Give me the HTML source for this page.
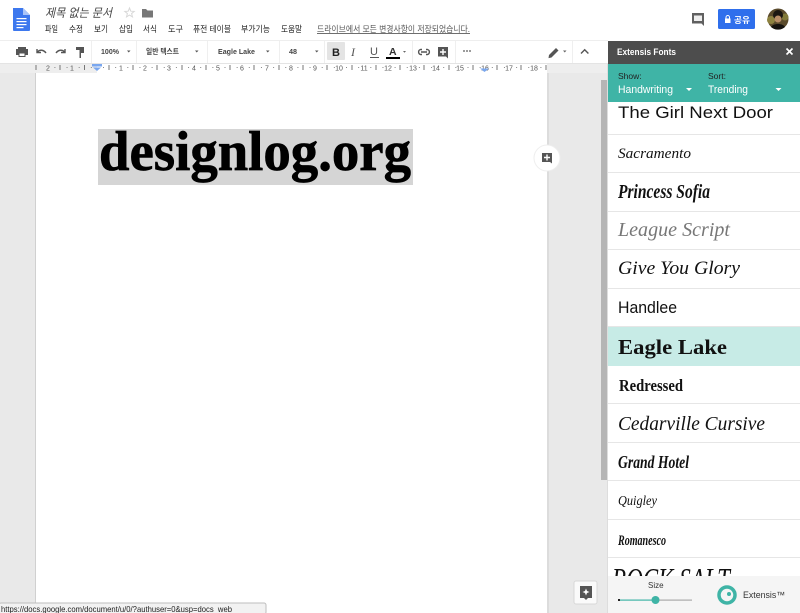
<!DOCTYPE html>
<html><head><meta charset="utf-8"><style>
html,body{margin:0;padding:0;background:#fff;width:800px;height:613px;overflow:hidden}
svg{display:block}
.k{font-family:"Liberation Sans","Noto Sans CJK KR",sans-serif}
.m{font-size:8.5px;fill:#222}
.t{font-size:7.5px;fill:#444;font-family:"Liberation Sans","Noto Sans CJK KR",sans-serif;font-weight:bold}
.r{font-size:7px;fill:#555;font-family:"Liberation Sans",sans-serif;text-anchor:middle}
.s{font-family:"Liberation Serif",serif;font-style:italic;fill:#111}
.h{font-family:"Liberation Sans",sans-serif;fill:#111}
.i{fill:none;stroke:#555;stroke-width:1.4}
</style></head><body>
<svg width="800" height="613" viewBox="0 0 800 613" xmlns="http://www.w3.org/2000/svg">
<rect width="800" height="613" fill="#fff"/>
<!-- doc icon -->
<path d="M13 8h10l7 7v15a1 1 0 0 1-1 1H14a1 1 0 0 1-1-1z" fill="#3d78ee"/>
<path d="M23 8l7 7h-7z" fill="#a9c4f7"/>
<rect x="16.500" y="18" width="10" height="1.200" fill="#fff"/><rect x="16.500" y="21" width="10" height="1.200" fill="#fff"/><rect x="16.500" y="24" width="10" height="1.200" fill="#fff"/><rect x="16.500" y="27" width="7" height="1.200" fill="#fff"/>
<!-- title -->
<text x="45" y="17" class="k" font-size="12" font-style="italic" fill="#444" textLength="67" lengthAdjust="spacingAndGlyphs">제목 없는 문서</text>
<path d="M129.500 8l1.300 3.200 3.400.2-2.600 2.200.9 3.300-3-1.800-3 1.800.9-3.300-2.600-2.200 3.400-.2z" fill="none" stroke="#d8d8d8" stroke-width="1"/>
<path d="M142 9h4l1.500 1.500H153v7h-11z" fill="#777"/>
<!-- menu -->
<text x="45" y="32" class="k m" textLength="13" lengthAdjust="spacingAndGlyphs">파일</text>
<text x="69" y="32" class="k m" textLength="14" lengthAdjust="spacingAndGlyphs">수정</text>
<text x="94" y="32" class="k m" textLength="14" lengthAdjust="spacingAndGlyphs">보기</text>
<text x="119" y="32" class="k m" textLength="14" lengthAdjust="spacingAndGlyphs">삽입</text>
<text x="143" y="32" class="k m" textLength="14" lengthAdjust="spacingAndGlyphs">서식</text>
<text x="168" y="32" class="k m" textLength="15" lengthAdjust="spacingAndGlyphs">도구</text>
<text x="193" y="32" class="k m" textLength="38" lengthAdjust="spacingAndGlyphs">퓨전 테이블</text>
<text x="241" y="32" class="k m" textLength="29" lengthAdjust="spacingAndGlyphs">부가기능</text>
<text x="281" y="32" class="k m" textLength="21" lengthAdjust="spacingAndGlyphs">도움말</text>
<text x="317" y="32" class="k" font-size="8.500" fill="#555" text-decoration="underline" textLength="153" lengthAdjust="spacingAndGlyphs">드라이브에서 모든 변경사항이 저장되었습니다.</text>
<!-- top right -->
<path d="M692 13h12v13l-2.500-2.500H692z" fill="#606060"/><rect x="694" y="15.500" width="8" height="5.500" fill="#eee"/>
<rect x="718" y="9" width="37" height="20" rx="1.500" fill="#2f6fec"/>
<rect x="725" y="18.500" width="5.500" height="4.500" fill="#fff"/><path d="M726 18.500v-1.200a1.700 1.700 0 0 1 3.500 0v1.200" fill="none" stroke="#fff"/>
<text x="734" y="23" class="k" font-size="8.500" font-weight="bold" fill="#fff" textLength="16" lengthAdjust="spacingAndGlyphs">공유</text>
<circle cx="778" cy="19" r="10.500" fill="#5a4a2c"/>
<circle cx="771" cy="20" r="4" fill="#8d8240"/><circle cx="785" cy="17" r="3.500" fill="#827a3a"/>
<circle cx="778" cy="15" r="5" fill="#1c1712"/><circle cx="778" cy="19" r="3.500" fill="#b98d68"/>
<path d="M771 27c2-4 12-4 14 0a10.500 10.500 0 0 1-14 0z" fill="#15120f"/>
<!-- toolbar -->
<rect x="0" y="40" width="608" height="1" fill="#eee"/>
<rect x="0" y="63" width="608" height="1" fill="#e4e4e4"/>
<rect x="91" y="41" width="1" height="22" fill="#efefef"/><rect x="136" y="41" width="1" height="22" fill="#efefef"/><rect x="207" y="41" width="1" height="22" fill="#efefef"/><rect x="279" y="41" width="1" height="22" fill="#efefef"/><rect x="324" y="41" width="1" height="22" fill="#efefef"/><rect x="412" y="41" width="1" height="22" fill="#efefef"/><rect x="455" y="41" width="1" height="22" fill="#efefef"/><rect x="572" y="41" width="1" height="22" fill="#efefef"/>
<!-- print -->
<path d="M18 47h8v2h2v6h-2.500v2h-7v-2H16v-6h2z" fill="#555"/><rect x="19.500" y="53.500" width="5" height="2.500" fill="#fff"/>
<path class="i" d="M37 49v3.500h4M37.500 52c2-2.500 6-2.500 8.500 1"/>
<path class="i" d="M65 49v3.500h-4M64.500 52c-2-2.500-6-2.500-8.500 1"/>
<path d="M76 47h8v3h-8z M79.500 50h4.500v3h-3v5h-1.500z" fill="#555"/>
<text x="101" y="54" class="t" textLength="18" lengthAdjust="spacingAndGlyphs">100%</text>
<path d="M127 50.500h3.500l-1.750 2z" fill="#555"/>
<text x="146" y="54" class="t" font-weight="normal" textLength="33" lengthAdjust="spacingAndGlyphs">일반 텍스트</text>
<path d="M195 50.500h3.500l-1.750 2z" fill="#555"/>
<text x="218" y="54" class="t" textLength="37" lengthAdjust="spacingAndGlyphs">Eagle Lake</text>
<path d="M266 50.500h3.500l-1.750 2z" fill="#555"/>
<text x="289" y="54" class="t" textLength="8" lengthAdjust="spacingAndGlyphs">48</text>
<path d="M315 50.500h3.500l-1.750 2z" fill="#555"/>
<rect x="327" y="42" width="18" height="18" rx="1" fill="#e4e4e4"/>
<text x="332" y="56" font-family="Liberation Sans" font-weight="bold" font-size="11" fill="#222">B</text>
<text x="351" y="56" font-family="Liberation Serif" font-style="italic" font-size="12" fill="#555">I</text>
<text x="370" y="55" font-family="Liberation Sans" font-size="11" fill="#555">U</text><rect x="370" y="57" width="9" height="1" fill="#555"/>
<text x="389" y="55" font-family="Liberation Sans" font-size="10.500" fill="#333" font-weight="bold">A</text><rect x="386" y="57" width="14" height="2" fill="#000"/>
<path d="M403 51h3l-1.500 1.700z" fill="#666"/>
<path class="i" d="M422 49.500h-1.500a2.600 2.600 0 0 0 0 5h1.500M426 49.500h1.500a2.600 2.600 0 0 1 0 5H426M421 52h6"/>
<path d="M438 47h10v11.500l-2-2h-8z" fill="#555"/><path d="M442.300 49h1.400v2.300h2.300v1.400h-2.300V55h-1.400v-2.300H440v-1.400h2.300z" fill="#fff"/>
<circle cx="464" cy="51" r=".9" fill="#555"/><circle cx="467" cy="51" r=".9" fill="#555"/><circle cx="470" cy="51" r=".9" fill="#555"/>
<path d="M549 55l7-7 2.500 2.500-7 7-3 .6z" fill="#555"/>
<path d="M563 50.500h3.500l-1.750 2z" fill="#666"/>
<path class="i" d="M581 53.500l3.700-3.700 3.700 3.700"/>
<!-- grey bg -->
<rect x="0" y="72" width="608" height="541" fill="#e9e9e9"/>
<!-- ruler -->
<rect x="0" y="64" width="608" height="9" fill="#eeeeee"/>
<rect x="97" y="64" width="450" height="9" fill="#fff"/>
<text x="48" y="70.500" class="r">2</text><text x="72" y="70.500" class="r">1</text>
<text x="121" y="70.500" class="r">1</text><text x="145" y="70.500" class="r">2</text><text x="169" y="70.500" class="r">3</text><text x="194" y="70.500" class="r">4</text><text x="218" y="70.500" class="r">5</text><text x="242" y="70.500" class="r">6</text><text x="267" y="70.500" class="r">7</text><text x="291" y="70.500" class="r">8</text><text x="315" y="70.500" class="r">9</text><text x="339" y="70.500" class="r">10</text><text x="364" y="70.500" class="r">11</text><text x="388" y="70.500" class="r">12</text><text x="413" y="70.500" class="r">13</text><text x="436" y="70.500" class="r">14</text><text x="460" y="70.500" class="r">15</text><text x="485" y="70.500" class="r">16</text><text x="509" y="70.500" class="r">17</text><text x="534" y="70.500" class="r">18</text>
<path stroke="#777" stroke-width="1" d="M36 65v5M60 65v5M84.500 65v5M109 65v5M133 65v5M157 65v5M182 65v5M206 65v5M230 65v5M254 65v5M279 65v5M303 65v5M327 65v5M352 65v5M376 65v5M400 65v5M424 65v5M449 65v5M473 65v5M497 65v5M521 65v5M546 65v5"/>
<line x1="54.400" y1="67.500" x2="546" y2="67.500" stroke="#888" stroke-width="1" stroke-dasharray="1 11.15"/>
<path fill="#7aa7ef" d="M92 64h10v2.500h-10zM93 67.500h8l-4 3.500z"/>
<path fill="#7aa7ef" d="M480 68.500h9l-4.500 3.500z"/>
<!-- page -->
<rect x="35" y="73" width="1" height="540" fill="#d0d0d0"/>
<rect x="36" y="73" width="511" height="540" fill="#fff"/>
<rect x="547" y="73" width="2" height="540" fill="#dcdcdc"/>
<!-- selection text -->
<rect x="98" y="129" width="315" height="56" fill="#d5d5d5"/>
<text x="99" y="170" font-family="Liberation Serif" font-weight="bold" font-size="56" fill="#000" stroke="#000" stroke-width=".7" textLength="312" lengthAdjust="spacingAndGlyphs">designlog.org</text>
<!-- add comment bubble -->
<circle cx="547" cy="158" r="13" fill="#fff" stroke="#eee"/>
<path d="M542 153h10v10.500l-2-1.500h-8z" fill="#555"/><path d="M546.300 154.500h1.400v2.300h2.300v1.400h-2.300v2.300h-1.400v-2.300H544v-1.400h2.300z" fill="#fff"/>
<!-- scrollbar -->
<rect x="601" y="80" width="6" height="400" fill="#b5b5b5"/>
<rect x="607" y="64" width="1" height="549" fill="#ddd"/>
<!-- panel -->
<rect x="608" y="41" width="192" height="572" fill="#fff"/>
<rect x="608" y="41" width="192" height="23" fill="#4d4d4d"/>
<text x="617" y="55" font-family="Liberation Sans" font-weight="bold" font-size="9" fill="#fff" textLength="59" lengthAdjust="spacingAndGlyphs">Extensis Fonts</text>
<path d="M786.500 48.500l6 6m0-6l-6 6" stroke="#fff" stroke-width="1.600" fill="none"/>
<rect x="608" y="64" width="192" height="38" fill="#3fb4a6"/>
<text x="618" y="79" font-family="Liberation Sans" font-size="8.500" fill="#222">Show:</text>
<text x="708" y="79" font-family="Liberation Sans" font-size="8.500" fill="#222">Sort:</text>
<text x="618" y="93" font-family="Liberation Sans" font-size="11" fill="#fff" textLength="55" lengthAdjust="spacingAndGlyphs">Handwriting</text>
<text x="708" y="93" font-family="Liberation Sans" font-size="11" fill="#fff" textLength="40" lengthAdjust="spacingAndGlyphs">Trending</text>
<path d="M686 88h6l-3 3zM775.500 88h6l-3 3z" fill="#fff"/>
<!-- rows -->
<rect x="608" y="327" width="192" height="39" fill="#c7ebe6"/>
<path stroke="#e6e6e6" stroke-width="1" d="M608 134.500h192M608 172.500h192M608 211.500h192M608 249.500h192M608 288.500h192M608 326.500h192M608 403.500h192M608 442.500h192M608 480.500h192M608 519.500h192M608 557.500h192"/>
<text x="618" y="118" class="h" font-size="17" textLength="155" lengthAdjust="spacingAndGlyphs">The Girl Next Door</text>
<text x="618" y="158" class="s" font-size="15" textLength="73" lengthAdjust="spacingAndGlyphs">Sacramento</text>
<text x="618" y="198" class="s" font-size="20" font-weight="bold" textLength="92" lengthAdjust="spacingAndGlyphs">Princess Sofia</text>
<text x="618" y="236" class="s" font-size="20" style="fill:#777" textLength="112" lengthAdjust="spacingAndGlyphs">League Script</text>
<text x="618" y="274" class="s" font-size="19" textLength="122" lengthAdjust="spacingAndGlyphs">Give You Glory</text>
<text x="618" y="313" class="h" font-size="17" textLength="59" lengthAdjust="spacingAndGlyphs">Handlee</text>
<text x="618" y="354" font-family="Liberation Serif" font-weight="bold" font-size="21" fill="#111" textLength="109" lengthAdjust="spacingAndGlyphs">Eagle Lake</text>
<text x="619" y="391" font-family="Liberation Serif" font-weight="bold" font-size="17" fill="#111" textLength="64" lengthAdjust="spacingAndGlyphs">Redressed</text>
<text x="618" y="430" class="s" font-size="20" textLength="147" lengthAdjust="spacingAndGlyphs">Cedarville Cursive</text>
<text x="618" y="468" class="s" font-weight="bold" font-size="18" textLength="71" lengthAdjust="spacingAndGlyphs">Grand Hotel</text>
<text x="618" y="505" class="s" font-size="14" textLength="39" lengthAdjust="spacingAndGlyphs">Quigley</text>
<text x="618" y="545" class="s" font-weight="bold" font-size="15" textLength="48" lengthAdjust="spacingAndGlyphs">Romanesco</text>
<text x="612" y="590" font-family="Liberation Serif" font-style="italic" font-size="32" fill="#111" textLength="118" lengthAdjust="spacingAndGlyphs">ROCK SALT</text>
<!-- footer -->
<rect x="608" y="576" width="192" height="37" fill="#f5f5f5"/>
<text x="648" y="588" font-family="Liberation Sans" font-size="8" fill="#333">Size</text>
<rect x="618" y="599.500" width="38" height="1.200" fill="#3fb4a6"/><rect x="656" y="599.500" width="36" height="1.200" fill="#aaa"/><rect x="618" y="599" width="2" height="2" fill="#222"/>
<circle cx="655.500" cy="600" r="4" fill="#3fb4a6"/>
<circle cx="727" cy="595" r="8" fill="none" stroke="#3fb4a6" stroke-width="3.500"/>
<circle cx="729" cy="594" r="2" fill="#3fb4a6"/>
<text x="743" y="598" font-family="Liberation Sans" font-size="9" fill="#333" textLength="42" lengthAdjust="spacingAndGlyphs">Extensis™</text>
<!-- explore button -->
<rect x="574" y="581" width="23" height="23" rx="2" fill="#fafafa" stroke="#d8d8d8"/>
<path d="M580 586h12v12h-4l-2 2-2-2h-4z" fill="#555"/><path d="M586 588.500l1 2.500 2.500 1-2.500 1-1 2.500-1-2.500-2.500-1 2.500-1z" fill="#fff"/>
<!-- status bubble -->
<rect x="-1" y="603" width="267" height="11" rx="2" fill="#f2f2f2" stroke="#bdbdbd"/>
<text x="1" y="612" font-family="Liberation Sans" font-size="8.500" fill="#222" textLength="231" lengthAdjust="spacingAndGlyphs">https://docs.google.com/document/u/0/?authuser=0&amp;usp=docs_web</text>
</svg>
</body></html>
